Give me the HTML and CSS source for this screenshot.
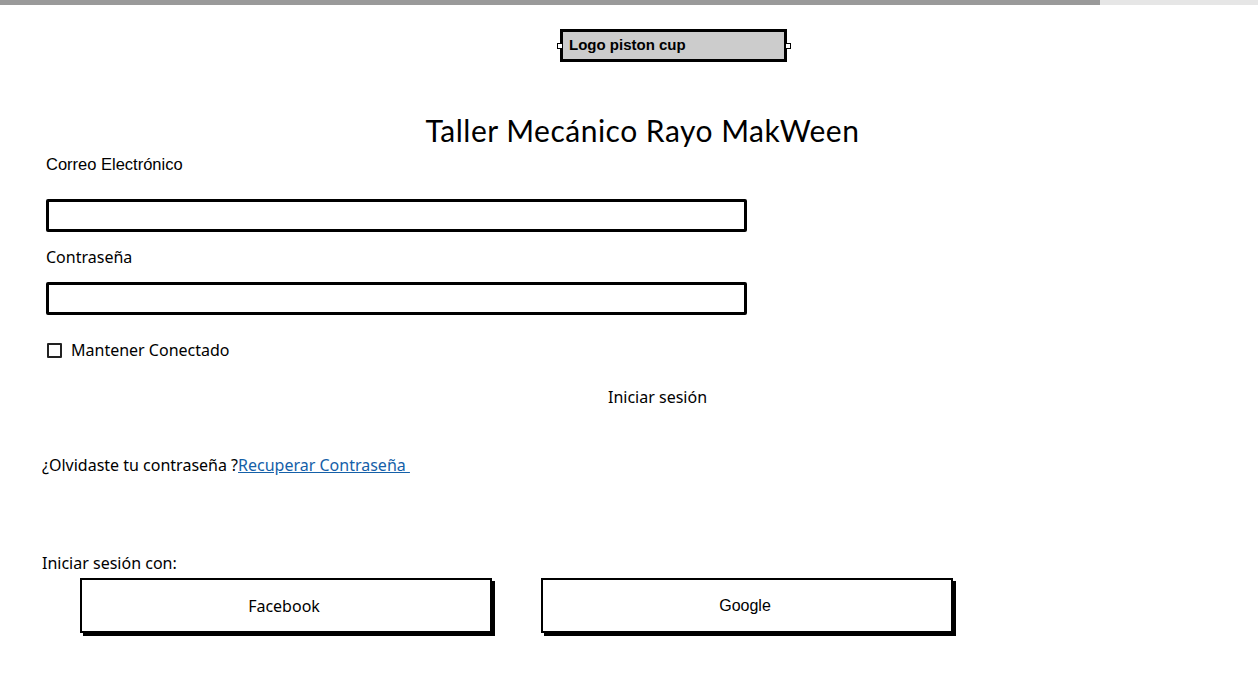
FILE: index.html
```html
<!DOCTYPE html>
<html lang="es">
<head>
<meta charset="utf-8">
<title>Taller Mecánico Rayo MakWeen</title>
<link rel="stylesheet" href="styles.css">
</head>
<body>
  <div class="topbar"><div class="progress"></div><div class="rest"></div></div>
  <div class="logo-row">
    <div class="logo">Logo piston cup<span class="handle left"></span><span class="handle right"></span></div>
  </div>
  <h1 class="title">Taller Mecánico Rayo MakWeen</h1>
  <div class="form">
    <div class="label label-first">Correo Electrónico</div>
    <div class="input"></div>
    <div class="label label-next">Contraseña</div>
    <div class="input"></div>
    <div class="check-row"><span class="checkbox"></span><span>Mantener Conectado</span></div>
    <div class="login">Iniciar sesión</div>
  </div>
  <div class="forgot">¿Olvidaste tu contraseña ?<a href="#" class="link">Recuperar Contraseña&nbsp;</a></div>
  <div class="with">Iniciar sesión con:</div>
  <div class="socials">
    <div class="btn">Facebook</div>
    <div class="btn google">Google</div>
  </div>
</body>
</html>
```
FILE: styles.css
```css
* { box-sizing: border-box; }
body {
  margin: 0;
  background: #fff;
  color: #000;
  font-family: "Noto Sans", "Lato", sans-serif;
  font-size: 16px;
  width: 1258px;
  height: 677px;
  overflow: hidden;
}
.topbar { display: flex; height: 5px; }
.progress { width: 1100px; background: #9a9a9a; }
.rest { flex: 1; background: #e6e6e6; }
.logo-row { padding-top: 24px; padding-left: 560px; }
.logo {
  position: relative;
  width: 227px;
  height: 33px;
  border: 3px solid #000;
  background: #cccccc;
  font-family: "Liberation Sans", Arial, sans-serif;
  font-weight: bold;
  font-size: 15px;
  line-height: 26px;
  padding-left: 6px;
}
.handle {
  position: absolute;
  top: 11px;
  width: 6px;
  height: 6px;
  background: #fff;
  border: 1px solid #000;
}
.handle.left { left: -6px; }
.handle.right { right: -7px; }
.title {
  margin: 50px 0 0 0;
  padding-left: 27px;
  text-align: center;
  font-family: "Lato", "Noto Sans", sans-serif;
  font-weight: normal;
  font-size: 30px;
  line-height: 36px;
  letter-spacing: 0.5px;
}
.form { padding-left: 46px; }
.label {
  line-height: 20px;
  font-family: "Liberation Sans", Arial, sans-serif;
  font-size: 16.5px;
}
.label-first { margin-top: 6px; margin-bottom: 25px; }
.label-next { margin-top: 15px; margin-bottom: 15px; font-family: "Noto Sans", "Lato", sans-serif; font-size: 16px; }
.input {
  width: 701px;
  height: 33px;
  border: 3px solid #000;
  border-radius: 2px;
}
.check-row {
  margin-top: 25px;
  display: flex;
  align-items: center;
  gap: 9px;
  line-height: 20px;
  padding-left: 1px;
}
.checkbox {
  width: 15px;
  height: 15px;
  border: 2px solid #222;
  border-radius: 1px;
}
.login {
  margin-top: 27px;
  padding-left: 562px;
  line-height: 20px;
}
.forgot {
  margin-top: 48px;
  padding-left: 42px;
  line-height: 20px;
}
.link { color: #1560a8; text-decoration: underline; }
.with {
  margin-top: 78px;
  padding-left: 42px;
  line-height: 20px;
}
.socials {
  margin-top: 5px;
  padding-left: 80px;
  display: flex;
  gap: 49px;
}
.btn {
  width: 412px;
  height: 55px;
  border: 2px solid #000;
  box-shadow: 3px 3px 0 #000;
  display: flex;
  align-items: center;
  justify-content: center;
  padding-right: 4px;
}
.btn.google { font-family: "Liberation Sans", Arial, sans-serif; }
```
